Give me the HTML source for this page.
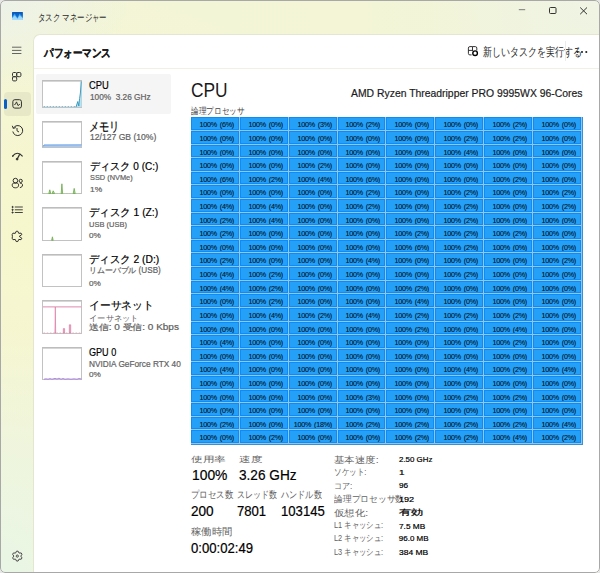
<!DOCTYPE html><html><head><meta charset="utf-8"><title>タスク マネージャー</title><style>
*{box-sizing:border-box}
html,body{margin:0;padding:0}
body{width:600px;height:573px;overflow:hidden;position:relative;background:#e6e6e6;font-family:"Liberation Sans",sans-serif}
#win{position:absolute;left:0;top:0;width:600px;height:573px;border-radius:5px;overflow:hidden;
 background:
  radial-gradient(ellipse 210px 230px at 0px 573px, rgba(233,246,229,1) 0%, rgba(233,246,229,0) 100%),
  radial-gradient(ellipse 130px 90px at 0px 0px, rgba(237,242,233,1) 0%, rgba(237,242,233,0) 100%),
  radial-gradient(ellipse 160px 90px at 600px 0px, rgba(239,244,228,1) 0%, rgba(239,244,228,0) 100%),
  radial-gradient(ellipse 360px 260px at 40px 240px, rgba(247,247,205,1) 0%, rgba(247,247,205,0) 100%),
  linear-gradient(90deg, #f3f5d8 0%, #f3f5d6 60%, #f0f4de 100%);}
#frame{position:absolute;left:0;top:0;width:600px;height:573px;border:1px solid #a8a8a8;border-radius:5px}
.tx{position:absolute;white-space:nowrap;transform-origin:0 50%;-webkit-text-stroke:0.2px currentColor}
#panel{position:absolute;left:33px;top:34px;width:566px;height:538px;background:#fff;border-top:1px solid #e4e6cf;border-left:1px solid #e4e6cf;border-top-left-radius:7px}
#hdrline{position:absolute;left:34px;top:68px;width:565px;height:1px;background:#f0f0e4}
#selcpu{position:absolute;left:36px;top:74px;width:134.5px;height:40px;background:#f5f5f5;border-radius:2px}
.thumb{position:absolute;left:42px;width:40px;border:1px solid #c2c2c2;border-top:1px solid #bdbdbd;box-shadow:inset 0 1px 0 #d6d6d6;background:#fff;overflow:hidden}
#grid{position:absolute;left:191px;top:117px;width:392px;height:328px;background:#93c6ee;border-right:1px solid #3d8fcf;border-bottom:1px solid #3d8fcf}
.c{position:absolute;background:#25a0f8;border:1px solid #0c8cf4;font-size:7.2px;line-height:13.5px;letter-spacing:-0.25px;word-spacing:1.2px;text-align:right;padding-right:4px;color:#001424;white-space:nowrap;overflow:hidden;-webkit-text-stroke:0.1px #001424}
#navsel{position:absolute;left:4px;top:92px;width:26.5px;height:23.5px;background:rgba(0,0,0,0.055);border-radius:4px}
#navbar{position:absolute;left:4px;top:98.7px;width:2.6px;height:10.3px;background:#0a5fc4;border-radius:2px}
svg{position:absolute;overflow:visible}
</style></head><body>
<div id="win">
<div id="panel"></div><div id="hdrline"></div><div id="selcpu"></div>
<div id="navsel"></div><div id="navbar"></div>
<div class="thumb" id="th_cpu" style="top:80.00px;height:28.00px"></div>
<div class="thumb" id="th_mem" style="top:121.00px;height:27.00px"></div>
<div class="thumb" id="th_d0" style="top:161.00px;height:33.00px"></div>
<div class="thumb" id="th_d1" style="top:207.00px;height:34.00px"></div>
<div class="thumb" id="th_d2" style="top:254.00px;height:33.00px"></div>
<div class="thumb" id="th_eth" style="top:300.00px;height:34.00px"></div>
<div class="thumb" id="th_gpu" style="top:347.00px;height:33.00px"></div>
<svg style="left:0;top:0" width="600" height="573" viewBox="0 0 600 573"><rect x="43.50" y="106.20" width="1.80" height="0.80" fill="#5fb0cf"/><rect x="46.50" y="106.20" width="1.80" height="0.80" fill="#5fb0cf"/><rect x="49.50" y="106.20" width="1.80" height="0.80" fill="#5fb0cf"/><rect x="52.50" y="106.20" width="1.80" height="0.80" fill="#5fb0cf"/><rect x="55.50" y="106.20" width="1.80" height="0.80" fill="#5fb0cf"/><rect x="58.50" y="106.20" width="1.80" height="0.80" fill="#5fb0cf"/><rect x="61.50" y="106.20" width="1.80" height="0.80" fill="#5fb0cf"/><rect x="64.50" y="106.20" width="1.80" height="0.80" fill="#5fb0cf"/><rect x="67.50" y="106.20" width="1.80" height="0.80" fill="#5fb0cf"/><rect x="70.50" y="106.20" width="1.80" height="0.80" fill="#5fb0cf"/><rect x="73.50" y="106.20" width="1.80" height="0.80" fill="#5fb0cf"/><path d="M76 107 L77.8 101.5 L78.8 106 L79.6 98.5 L80.4 93 L81.2 81.5 L81.6 81.5 L81.6 107 Z" fill="#b7e2f1"/><path d="M76 107 L77.8 101.5 L78.8 106 L79.6 98.5 L80.4 93 L81.2 81.5" fill="none" stroke="#2f95bb" stroke-width="0.9"/><path d="M43.2 147 L44 145.2 L81.5 145.2 L81.5 147 Z" fill="#a9c9f2"/><path d="M43.2 146.6 L44 145 L81.5 144.9" fill="none" stroke="#5b9ae6" stroke-width="1"/><rect x="43.50" y="193.00" width="1.60" height="0.70" fill="#a8cf8a"/><rect x="46.70" y="193.00" width="1.60" height="0.70" fill="#a8cf8a"/><rect x="49.90" y="193.00" width="1.60" height="0.70" fill="#a8cf8a"/><rect x="53.10" y="193.00" width="1.60" height="0.70" fill="#a8cf8a"/><rect x="56.30" y="193.00" width="1.60" height="0.70" fill="#a8cf8a"/><rect x="59.50" y="193.00" width="1.60" height="0.70" fill="#a8cf8a"/><rect x="62.70" y="193.00" width="1.60" height="0.70" fill="#a8cf8a"/><rect x="65.90" y="193.00" width="1.60" height="0.70" fill="#a8cf8a"/><rect x="69.10" y="193.00" width="1.60" height="0.70" fill="#a8cf8a"/><rect x="72.30" y="193.00" width="1.60" height="0.70" fill="#a8cf8a"/><rect x="75.50" y="193.00" width="1.60" height="0.70" fill="#a8cf8a"/><rect x="78.70" y="193.00" width="1.60" height="0.70" fill="#a8cf8a"/><path d="M48.8 193.5 L49.8 189.8 L50.8 193.5 Z M52.2 193.5 L53.2 190.8 L54.6 193.5 Z M61.2 193.5 L61.9 183.8 L62.6 193.5 Z M73.2 193.5 L74.2 188.4 L75.2 193.5 Z" fill="#b9dc9d" stroke="#6aa84a" stroke-width="0.8"/><path d="M51.6 240.3 L52.4 236.8 L53.2 240.3 Z" fill="#9ccc70" stroke="#6aa84a" stroke-width="0.7"/><rect x="43" y="306.2" width="38.6" height="1.3" fill="#e7a3bf"/><rect x="43.50" y="332.60" width="1.60" height="0.70" fill="#e4a0bb"/><rect x="46.70" y="332.60" width="1.60" height="0.70" fill="#e4a0bb"/><rect x="49.90" y="332.60" width="1.60" height="0.70" fill="#e4a0bb"/><rect x="53.10" y="332.60" width="1.60" height="0.70" fill="#e4a0bb"/><rect x="56.30" y="332.60" width="1.60" height="0.70" fill="#e4a0bb"/><rect x="59.50" y="332.60" width="1.60" height="0.70" fill="#e4a0bb"/><rect x="62.70" y="332.60" width="1.60" height="0.70" fill="#e4a0bb"/><rect x="65.90" y="332.60" width="1.60" height="0.70" fill="#e4a0bb"/><rect x="69.10" y="332.60" width="1.60" height="0.70" fill="#e4a0bb"/><rect x="72.30" y="332.60" width="1.60" height="0.70" fill="#e4a0bb"/><rect x="75.50" y="332.60" width="1.60" height="0.70" fill="#e4a0bb"/><rect x="78.70" y="332.60" width="1.60" height="0.70" fill="#e4a0bb"/><path d="M54.9 333 L55.3 307 L55.7 333 Z" fill="#f0b8cc" stroke="#d8709a" stroke-width="0.6"/><path d="M63.3 333 L63.3 328.6 L64.6 328.6 L64.6 333 Z M69.3 333 L69.3 324.8 L70.7 324.8 L70.7 333 Z" fill="#eaa9c3" stroke="#d8709a" stroke-width="0.6"/><path d="M44 379.2 L46 378.8 L48 379.2 L50 378.6 L52 379.2 L55 378.4 L57 379 L59 378.2 L61 379.2 L63 378.5 L65 379.2 L68 378.8 L71 379.2 L74 378.8 L77 379.2 L79 378.5 L81.5 379" fill="none" stroke="#a77be6" stroke-width="0.9"/></svg>
<div id="grid"><div class="c" style="left:0px;top:0px;width:48px;height:13px">100% (6%)</div><div class="c" style="left:49px;top:0px;width:48px;height:13px">100% (0%)</div><div class="c" style="left:98px;top:0px;width:48px;height:13px">100% (3%)</div><div class="c" style="left:147px;top:0px;width:47px;height:13px">100% (2%)</div><div class="c" style="left:195px;top:0px;width:48px;height:13px">100% (0%)</div><div class="c" style="left:244px;top:0px;width:48px;height:13px">100% (0%)</div><div class="c" style="left:293px;top:0px;width:48px;height:13px">100% (2%)</div><div class="c" style="left:342px;top:0px;width:48px;height:13px">100% (0%)</div><div class="c" style="left:0px;top:14px;width:48px;height:13px">100% (0%)</div><div class="c" style="left:49px;top:14px;width:48px;height:13px">100% (0%)</div><div class="c" style="left:98px;top:14px;width:48px;height:13px">100% (0%)</div><div class="c" style="left:147px;top:14px;width:47px;height:13px">100% (0%)</div><div class="c" style="left:195px;top:14px;width:48px;height:13px">100% (0%)</div><div class="c" style="left:244px;top:14px;width:48px;height:13px">100% (2%)</div><div class="c" style="left:293px;top:14px;width:48px;height:13px">100% (2%)</div><div class="c" style="left:342px;top:14px;width:48px;height:13px">100% (0%)</div><div class="c" style="left:0px;top:28px;width:48px;height:12px">100% (0%)</div><div class="c" style="left:49px;top:28px;width:48px;height:12px">100% (0%)</div><div class="c" style="left:98px;top:28px;width:48px;height:12px">100% (0%)</div><div class="c" style="left:147px;top:28px;width:47px;height:12px">100% (0%)</div><div class="c" style="left:195px;top:28px;width:48px;height:12px">100% (0%)</div><div class="c" style="left:244px;top:28px;width:48px;height:12px">100% (4%)</div><div class="c" style="left:293px;top:28px;width:48px;height:12px">100% (0%)</div><div class="c" style="left:342px;top:28px;width:48px;height:12px">100% (0%)</div><div class="c" style="left:0px;top:41px;width:48px;height:13px">100% (0%)</div><div class="c" style="left:49px;top:41px;width:48px;height:13px">100% (0%)</div><div class="c" style="left:98px;top:41px;width:48px;height:13px">100% (2%)</div><div class="c" style="left:147px;top:41px;width:47px;height:13px">100% (0%)</div><div class="c" style="left:195px;top:41px;width:48px;height:13px">100% (0%)</div><div class="c" style="left:244px;top:41px;width:48px;height:13px">100% (0%)</div><div class="c" style="left:293px;top:41px;width:48px;height:13px">100% (0%)</div><div class="c" style="left:342px;top:41px;width:48px;height:13px">100% (0%)</div><div class="c" style="left:0px;top:55px;width:48px;height:12px">100% (6%)</div><div class="c" style="left:49px;top:55px;width:48px;height:12px">100% (2%)</div><div class="c" style="left:98px;top:55px;width:48px;height:12px">100% (4%)</div><div class="c" style="left:147px;top:55px;width:47px;height:12px">100% (6%)</div><div class="c" style="left:195px;top:55px;width:48px;height:12px">100% (0%)</div><div class="c" style="left:244px;top:55px;width:48px;height:12px">100% (0%)</div><div class="c" style="left:293px;top:55px;width:48px;height:12px">100% (2%)</div><div class="c" style="left:342px;top:55px;width:48px;height:12px">100% (0%)</div><div class="c" style="left:0px;top:68px;width:48px;height:13px">100% (0%)</div><div class="c" style="left:49px;top:68px;width:48px;height:13px">100% (0%)</div><div class="c" style="left:98px;top:68px;width:48px;height:13px">100% (0%)</div><div class="c" style="left:147px;top:68px;width:47px;height:13px">100% (2%)</div><div class="c" style="left:195px;top:68px;width:48px;height:13px">100% (0%)</div><div class="c" style="left:244px;top:68px;width:48px;height:13px">100% (2%)</div><div class="c" style="left:293px;top:68px;width:48px;height:13px">100% (0%)</div><div class="c" style="left:342px;top:68px;width:48px;height:13px">100% (2%)</div><div class="c" style="left:0px;top:82px;width:48px;height:13px">100% (4%)</div><div class="c" style="left:49px;top:82px;width:48px;height:13px">100% (4%)</div><div class="c" style="left:98px;top:82px;width:48px;height:13px">100% (0%)</div><div class="c" style="left:147px;top:82px;width:47px;height:13px">100% (2%)</div><div class="c" style="left:195px;top:82px;width:48px;height:13px">100% (0%)</div><div class="c" style="left:244px;top:82px;width:48px;height:13px">100% (2%)</div><div class="c" style="left:293px;top:82px;width:48px;height:13px">100% (0%)</div><div class="c" style="left:342px;top:82px;width:48px;height:13px">100% (2%)</div><div class="c" style="left:0px;top:96px;width:48px;height:12px">100% (2%)</div><div class="c" style="left:49px;top:96px;width:48px;height:12px">100% (4%)</div><div class="c" style="left:98px;top:96px;width:48px;height:12px">100% (0%)</div><div class="c" style="left:147px;top:96px;width:47px;height:12px">100% (0%)</div><div class="c" style="left:195px;top:96px;width:48px;height:12px">100% (0%)</div><div class="c" style="left:244px;top:96px;width:48px;height:12px">100% (2%)</div><div class="c" style="left:293px;top:96px;width:48px;height:12px">100% (0%)</div><div class="c" style="left:342px;top:96px;width:48px;height:12px">100% (0%)</div><div class="c" style="left:0px;top:109px;width:48px;height:13px">100% (2%)</div><div class="c" style="left:49px;top:109px;width:48px;height:13px">100% (0%)</div><div class="c" style="left:98px;top:109px;width:48px;height:13px">100% (0%)</div><div class="c" style="left:147px;top:109px;width:47px;height:13px">100% (0%)</div><div class="c" style="left:195px;top:109px;width:48px;height:13px">100% (2%)</div><div class="c" style="left:244px;top:109px;width:48px;height:13px">100% (2%)</div><div class="c" style="left:293px;top:109px;width:48px;height:13px">100% (2%)</div><div class="c" style="left:342px;top:109px;width:48px;height:13px">100% (0%)</div><div class="c" style="left:0px;top:123px;width:48px;height:12px">100% (0%)</div><div class="c" style="left:49px;top:123px;width:48px;height:12px">100% (0%)</div><div class="c" style="left:98px;top:123px;width:48px;height:12px">100% (0%)</div><div class="c" style="left:147px;top:123px;width:47px;height:12px">100% (0%)</div><div class="c" style="left:195px;top:123px;width:48px;height:12px">100% (6%)</div><div class="c" style="left:244px;top:123px;width:48px;height:12px">100% (2%)</div><div class="c" style="left:293px;top:123px;width:48px;height:12px">100% (0%)</div><div class="c" style="left:342px;top:123px;width:48px;height:12px">100% (0%)</div><div class="c" style="left:0px;top:136px;width:48px;height:13px">100% (2%)</div><div class="c" style="left:49px;top:136px;width:48px;height:13px">100% (0%)</div><div class="c" style="left:98px;top:136px;width:48px;height:13px">100% (0%)</div><div class="c" style="left:147px;top:136px;width:47px;height:13px">100% (4%)</div><div class="c" style="left:195px;top:136px;width:48px;height:13px">100% (0%)</div><div class="c" style="left:244px;top:136px;width:48px;height:13px">100% (0%)</div><div class="c" style="left:293px;top:136px;width:48px;height:13px">100% (0%)</div><div class="c" style="left:342px;top:136px;width:48px;height:13px">100% (2%)</div><div class="c" style="left:0px;top:150px;width:48px;height:13px">100% (4%)</div><div class="c" style="left:49px;top:150px;width:48px;height:13px">100% (2%)</div><div class="c" style="left:98px;top:150px;width:48px;height:13px">100% (0%)</div><div class="c" style="left:147px;top:150px;width:47px;height:13px">100% (0%)</div><div class="c" style="left:195px;top:150px;width:48px;height:13px">100% (0%)</div><div class="c" style="left:244px;top:150px;width:48px;height:13px">100% (2%)</div><div class="c" style="left:293px;top:150px;width:48px;height:13px">100% (0%)</div><div class="c" style="left:342px;top:150px;width:48px;height:13px">100% (0%)</div><div class="c" style="left:0px;top:164px;width:48px;height:12px">100% (4%)</div><div class="c" style="left:49px;top:164px;width:48px;height:12px">100% (2%)</div><div class="c" style="left:98px;top:164px;width:48px;height:12px">100% (0%)</div><div class="c" style="left:147px;top:164px;width:47px;height:12px">100% (0%)</div><div class="c" style="left:195px;top:164px;width:48px;height:12px">100% (2%)</div><div class="c" style="left:244px;top:164px;width:48px;height:12px">100% (0%)</div><div class="c" style="left:293px;top:164px;width:48px;height:12px">100% (0%)</div><div class="c" style="left:342px;top:164px;width:48px;height:12px">100% (0%)</div><div class="c" style="left:0px;top:177px;width:48px;height:13px">100% (0%)</div><div class="c" style="left:49px;top:177px;width:48px;height:13px">100% (2%)</div><div class="c" style="left:98px;top:177px;width:48px;height:13px">100% (0%)</div><div class="c" style="left:147px;top:177px;width:47px;height:13px">100% (0%)</div><div class="c" style="left:195px;top:177px;width:48px;height:13px">100% (4%)</div><div class="c" style="left:244px;top:177px;width:48px;height:13px">100% (0%)</div><div class="c" style="left:293px;top:177px;width:48px;height:13px">100% (0%)</div><div class="c" style="left:342px;top:177px;width:48px;height:13px">100% (0%)</div><div class="c" style="left:0px;top:191px;width:48px;height:13px">100% (0%)</div><div class="c" style="left:49px;top:191px;width:48px;height:13px">100% (4%)</div><div class="c" style="left:98px;top:191px;width:48px;height:13px">100% (2%)</div><div class="c" style="left:147px;top:191px;width:47px;height:13px">100% (4%)</div><div class="c" style="left:195px;top:191px;width:48px;height:13px">100% (2%)</div><div class="c" style="left:244px;top:191px;width:48px;height:13px">100% (2%)</div><div class="c" style="left:293px;top:191px;width:48px;height:13px">100% (2%)</div><div class="c" style="left:342px;top:191px;width:48px;height:13px">100% (0%)</div><div class="c" style="left:0px;top:205px;width:48px;height:12px">100% (0%)</div><div class="c" style="left:49px;top:205px;width:48px;height:12px">100% (0%)</div><div class="c" style="left:98px;top:205px;width:48px;height:12px">100% (0%)</div><div class="c" style="left:147px;top:205px;width:47px;height:12px">100% (0%)</div><div class="c" style="left:195px;top:205px;width:48px;height:12px">100% (2%)</div><div class="c" style="left:244px;top:205px;width:48px;height:12px">100% (0%)</div><div class="c" style="left:293px;top:205px;width:48px;height:12px">100% (4%)</div><div class="c" style="left:342px;top:205px;width:48px;height:12px">100% (0%)</div><div class="c" style="left:0px;top:218px;width:48px;height:13px">100% (4%)</div><div class="c" style="left:49px;top:218px;width:48px;height:13px">100% (0%)</div><div class="c" style="left:98px;top:218px;width:48px;height:13px">100% (0%)</div><div class="c" style="left:147px;top:218px;width:47px;height:13px">100% (0%)</div><div class="c" style="left:195px;top:218px;width:48px;height:13px">100% (0%)</div><div class="c" style="left:244px;top:218px;width:48px;height:13px">100% (0%)</div><div class="c" style="left:293px;top:218px;width:48px;height:13px">100% (2%)</div><div class="c" style="left:342px;top:218px;width:48px;height:13px">100% (0%)</div><div class="c" style="left:0px;top:232px;width:48px;height:12px">100% (0%)</div><div class="c" style="left:49px;top:232px;width:48px;height:12px">100% (0%)</div><div class="c" style="left:98px;top:232px;width:48px;height:12px">100% (0%)</div><div class="c" style="left:147px;top:232px;width:47px;height:12px">100% (0%)</div><div class="c" style="left:195px;top:232px;width:48px;height:12px">100% (0%)</div><div class="c" style="left:244px;top:232px;width:48px;height:12px">100% (0%)</div><div class="c" style="left:293px;top:232px;width:48px;height:12px">100% (0%)</div><div class="c" style="left:342px;top:232px;width:48px;height:12px">100% (0%)</div><div class="c" style="left:0px;top:245px;width:48px;height:13px">100% (4%)</div><div class="c" style="left:49px;top:245px;width:48px;height:13px">100% (0%)</div><div class="c" style="left:98px;top:245px;width:48px;height:13px">100% (0%)</div><div class="c" style="left:147px;top:245px;width:47px;height:13px">100% (0%)</div><div class="c" style="left:195px;top:245px;width:48px;height:13px">100% (0%)</div><div class="c" style="left:244px;top:245px;width:48px;height:13px">100% (4%)</div><div class="c" style="left:293px;top:245px;width:48px;height:13px">100% (2%)</div><div class="c" style="left:342px;top:245px;width:48px;height:13px">100% (4%)</div><div class="c" style="left:0px;top:259px;width:48px;height:13px">100% (0%)</div><div class="c" style="left:49px;top:259px;width:48px;height:13px">100% (0%)</div><div class="c" style="left:98px;top:259px;width:48px;height:13px">100% (0%)</div><div class="c" style="left:147px;top:259px;width:47px;height:13px">100% (0%)</div><div class="c" style="left:195px;top:259px;width:48px;height:13px">100% (0%)</div><div class="c" style="left:244px;top:259px;width:48px;height:13px">100% (0%)</div><div class="c" style="left:293px;top:259px;width:48px;height:13px">100% (0%)</div><div class="c" style="left:342px;top:259px;width:48px;height:13px">100% (0%)</div><div class="c" style="left:0px;top:273px;width:48px;height:12px">100% (0%)</div><div class="c" style="left:49px;top:273px;width:48px;height:12px">100% (0%)</div><div class="c" style="left:98px;top:273px;width:48px;height:12px">100% (0%)</div><div class="c" style="left:147px;top:273px;width:47px;height:12px">100% (3%)</div><div class="c" style="left:195px;top:273px;width:48px;height:12px">100% (0%)</div><div class="c" style="left:244px;top:273px;width:48px;height:12px">100% (2%)</div><div class="c" style="left:293px;top:273px;width:48px;height:12px">100% (2%)</div><div class="c" style="left:342px;top:273px;width:48px;height:12px">100% (0%)</div><div class="c" style="left:0px;top:286px;width:48px;height:13px">100% (0%)</div><div class="c" style="left:49px;top:286px;width:48px;height:13px">100% (0%)</div><div class="c" style="left:98px;top:286px;width:48px;height:13px">100% (0%)</div><div class="c" style="left:147px;top:286px;width:47px;height:13px">100% (0%)</div><div class="c" style="left:195px;top:286px;width:48px;height:13px">100% (0%)</div><div class="c" style="left:244px;top:286px;width:48px;height:13px">100% (0%)</div><div class="c" style="left:293px;top:286px;width:48px;height:13px">100% (0%)</div><div class="c" style="left:342px;top:286px;width:48px;height:13px">100% (0%)</div><div class="c" style="left:0px;top:300px;width:48px;height:12px">100% (2%)</div><div class="c" style="left:49px;top:300px;width:48px;height:12px">100% (0%)</div><div class="c" style="left:98px;top:300px;width:48px;height:12px">100% (18%)</div><div class="c" style="left:147px;top:300px;width:47px;height:12px">100% (2%)</div><div class="c" style="left:195px;top:300px;width:48px;height:12px">100% (2%)</div><div class="c" style="left:244px;top:300px;width:48px;height:12px">100% (2%)</div><div class="c" style="left:293px;top:300px;width:48px;height:12px">100% (2%)</div><div class="c" style="left:342px;top:300px;width:48px;height:12px">100% (4%)</div><div class="c" style="left:0px;top:313px;width:48px;height:13px">100% (0%)</div><div class="c" style="left:49px;top:313px;width:48px;height:13px">100% (2%)</div><div class="c" style="left:98px;top:313px;width:48px;height:13px">100% (0%)</div><div class="c" style="left:147px;top:313px;width:47px;height:13px">100% (0%)</div><div class="c" style="left:195px;top:313px;width:48px;height:13px">100% (2%)</div><div class="c" style="left:244px;top:313px;width:48px;height:13px">100% (2%)</div><div class="c" style="left:293px;top:313px;width:48px;height:13px">100% (4%)</div><div class="c" style="left:342px;top:313px;width:48px;height:13px">100% (2%)</div></div>
<div class="tx" id="t_title" style="left:37.70px;top:11.72px;font-size:9.59px;line-height:11.51px;color:#2b2b2b;-webkit-text-stroke:0;transform:scaleX(0.744)">タスク マネージャー</div>
<div class="tx" id="t_perf" style="left:43.80px;top:45.55px;font-size:12.35px;line-height:14.83px;color:#1b1b1b;font-weight:700;transform:scaleX(0.798)">パフォーマンス</div>
<div class="tx" id="t_newtask" style="left:483.30px;top:45.12px;font-size:11.92px;line-height:14.30px;color:#2b2b2b;-webkit-text-stroke:0;transform:scaleX(0.746)">新しいタスクを実行する</div>
<div class="tx" id="s_cpu" style="left:89.10px;top:78.74px;font-size:11.05px;line-height:13.26px;color:#000000;transform:scaleX(0.848)">CPU</div>
<div class="tx" id="s_cpu2" style="left:90.20px;top:93.29px;font-size:8.14px;line-height:9.77px;color:#626262;transform:scaleX(1.017)">100%  3.26 GHz</div>
<div class="tx" id="s_mem" style="left:89.20px;top:119.68px;font-size:12.65px;line-height:15.17px;color:#000000;transform:scaleX(0.786)">メモリ</div>
<div class="tx" id="s_mem2" style="left:89.50px;top:133.09px;font-size:8.14px;line-height:9.77px;color:#626262;transform:scaleX(1.057)">12/127 GB (10%)</div>
<div class="tx" id="s_d0" style="left:89.50px;top:159.53px;font-size:10.90px;line-height:13.08px;color:#000000;transform:scaleX(0.921)">ディスク 0 (C:)</div>
<div class="tx" id="s_d0a" style="left:89.80px;top:173.46px;font-size:7.70px;line-height:9.24px;color:#626262;transform:scaleX(0.959)">SSD (NVMe)</div>
<div class="tx" id="s_d0b" style="left:89.80px;top:185.18px;font-size:7.92px;line-height:9.51px;color:#626262;transform:scaleX(1.060)">1%</div>
<div class="tx" id="s_d1" style="left:88.90px;top:205.93px;font-size:10.90px;line-height:13.08px;color:#000000;transform:scaleX(0.947)">ディスク 1 (Z:)</div>
<div class="tx" id="s_d1a" style="left:89.00px;top:219.69px;font-size:7.99px;line-height:9.59px;color:#626262;transform:scaleX(0.939)">USB (USB)</div>
<div class="tx" id="s_d1b" style="left:89.00px;top:231.29px;font-size:7.99px;line-height:9.59px;color:#626262;transform:scaleX(1.027)">0%</div>
<div class="tx" id="s_d2" style="left:89.00px;top:252.53px;font-size:10.90px;line-height:13.08px;color:#000000;transform:scaleX(0.946)">ディスク 2 (D:)</div>
<div class="tx" id="s_d2a" style="left:89.00px;top:266.31px;font-size:8.28px;line-height:9.94px;color:#626262;transform:scaleX(0.986)">リムーバブル (USB)</div>
<div class="tx" id="s_d2b" style="left:89.00px;top:278.69px;font-size:7.99px;line-height:9.59px;color:#626262;transform:scaleX(1.027)">0%</div>
<div class="tx" id="s_eth" style="left:89.00px;top:298.98px;font-size:11.48px;line-height:13.78px;color:#000000;transform:scaleX(0.978)">イーサネット</div>
<div class="tx" id="s_eth2" style="left:89.00px;top:313.69px;font-size:8.14px;line-height:9.77px;color:#626262;-webkit-text-stroke:0;transform:scaleX(1.035)">イーサネット</div>
<div class="tx" id="s_eth3" style="left:89.00px;top:323.29px;font-size:8.14px;line-height:9.77px;color:#626262;transform:scaleX(1.230)">送信: 0 受信: 0 Kbps</div>
<div class="tx" id="s_gpu" style="left:89.00px;top:345.52px;font-size:10.76px;line-height:12.91px;color:#000000;transform:scaleX(0.845)">GPU 0</div>
<div class="tx" id="s_gpu2" style="left:89.00px;top:358.72px;font-size:8.43px;line-height:10.12px;color:#626262;transform:scaleX(0.982)">NVIDIA GeForce RTX 40</div>
<div class="tx" id="s_gpu3" style="left:89.00px;top:370.29px;font-size:7.99px;line-height:9.59px;color:#626262;transform:scaleX(1.027)">0%</div>
<div class="tx" id="m_cpu" style="left:190.50px;top:78.68px;font-size:19.62px;line-height:23.55px;color:#1a1a1a;-webkit-text-stroke:0;transform:scaleX(0.885)">CPU</div>
<div class="tx" id="m_model" style="left:351.30px;top:86.54px;font-size:11.05px;line-height:13.26px;color:#1b1b1b;transform:scaleX(0.941)">AMD Ryzen Threadripper PRO 9995WX 96-Cores</div>
<div class="tx" id="m_lp" style="left:191.00px;top:105.31px;font-size:9.45px;line-height:11.34px;color:#444;-webkit-text-stroke:0;transform:scaleX(0.851)">論理プロセッサ</div>
<div class="tx" id="st_use" style="left:191.40px;top:454.69px;font-size:8.14px;line-height:9.77px;color:#626262;-webkit-text-stroke:0;transform:scaleX(1.450)">使用率</div>
<div class="tx" id="st_spd" style="left:238.60px;top:454.69px;font-size:8.14px;line-height:9.77px;color:#626262;-webkit-text-stroke:0;transform:scaleX(1.440)">速度</div>
<div class="tx" id="st_use_v" style="left:191.60px;top:465.99px;font-size:15.12px;line-height:18.14px;color:#000000;transform:scaleX(0.917)">100%</div>
<div class="tx" id="st_spd_v" style="left:239.00px;top:465.99px;font-size:15.12px;line-height:18.14px;color:#000000;transform:scaleX(0.902)">3.26 GHz</div>
<div class="tx" id="st_proc" style="left:191.00px;top:489.37px;font-size:10.17px;line-height:12.21px;color:#626262;-webkit-text-stroke:0;transform:scaleX(0.842)">プロセス数</div>
<div class="tx" id="st_thr" style="left:236.60px;top:489.37px;font-size:10.17px;line-height:12.21px;color:#626262;-webkit-text-stroke:0;transform:scaleX(0.800)">スレッド数</div>
<div class="tx" id="st_hnd" style="left:281.00px;top:489.37px;font-size:10.17px;line-height:12.21px;color:#626262;-webkit-text-stroke:0;transform:scaleX(0.816)">ハンドル数</div>
<div class="tx" id="st_proc_v" style="left:191.00px;top:502.68px;font-size:13.81px;line-height:16.57px;color:#000000;transform:scaleX(0.982)">200</div>
<div class="tx" id="st_thr_v" style="left:237.00px;top:502.68px;font-size:13.81px;line-height:16.57px;color:#000000;transform:scaleX(0.950)">7801</div>
<div class="tx" id="st_hnd_v" style="left:281.25px;top:502.68px;font-size:13.81px;line-height:16.57px;color:#000000;transform:scaleX(0.951)">103145</div>
<div class="tx" id="st_up" style="left:191.00px;top:526.37px;font-size:10.17px;line-height:12.21px;color:#626262;-webkit-text-stroke:0;transform:scaleX(1.033)">稼働時間</div>
<div class="tx" id="st_up_v" style="left:191.00px;top:539.74px;font-size:14.53px;line-height:17.44px;color:#000000;transform:scaleX(0.904)">0:00:02:49</div>
<div class="tx" id="r_l0" style="left:334.00px;top:454.67px;font-size:9.01px;line-height:10.81px;color:#626262;-webkit-text-stroke:0;transform:scaleX(1.159)">基本速度:</div>
<div class="tx" id="r_v0" style="left:398.80px;top:455.49px;font-size:7.99px;line-height:9.59px;color:#000000;transform:scaleX(0.991)">2.50 GHz</div>
<div class="tx" id="r_l1" style="left:334.00px;top:467.13px;font-size:9.01px;line-height:10.81px;color:#626262;-webkit-text-stroke:0;transform:scaleX(0.841)">ソケット:</div>
<div class="tx" id="r_v1" style="left:398.80px;top:467.95px;font-size:7.99px;line-height:9.59px;color:#000000;transform:scaleX(1.233)">1</div>
<div class="tx" id="r_l2" style="left:334.00px;top:480.59px;font-size:9.01px;line-height:10.81px;color:#626262;-webkit-text-stroke:0;transform:scaleX(0.893)">コア:</div>
<div class="tx" id="r_v2" style="left:398.80px;top:481.41px;font-size:7.99px;line-height:9.59px;color:#000000;transform:scaleX(1.025)">96</div>
<div class="tx" id="r_l3" style="left:334.00px;top:494.05px;font-size:9.01px;line-height:10.81px;color:#626262;-webkit-text-stroke:0;transform:scaleX(0.975)">論理プロセッサ数:</div>
<div class="tx" id="r_v3" style="left:398.80px;top:494.87px;font-size:7.99px;line-height:9.59px;color:#000000;transform:scaleX(1.136)">192</div>
<div class="tx" id="r_l4" style="left:334.00px;top:507.51px;font-size:9.01px;line-height:10.81px;color:#626262;-webkit-text-stroke:0;transform:scaleX(1.155)">仮想化:</div>
<div class="tx" id="r_v4" style="left:398.80px;top:508.33px;font-size:7.99px;line-height:9.59px;color:#000000;transform:scaleX(1.520)">有効</div>
<div class="tx" id="r_l5" style="left:334.00px;top:519.97px;font-size:9.01px;line-height:10.81px;color:#626262;-webkit-text-stroke:0;transform:scaleX(0.816)">L1 キャッシュ:</div>
<div class="tx" id="r_v5" style="left:398.80px;top:521.79px;font-size:7.99px;line-height:9.59px;color:#000000;transform:scaleX(1.039)">7.5 MB</div>
<div class="tx" id="r_l6" style="left:334.00px;top:533.43px;font-size:9.01px;line-height:10.81px;color:#626262;-webkit-text-stroke:0;transform:scaleX(0.816)">L2 キャッシュ:</div>
<div class="tx" id="r_v6" style="left:398.80px;top:534.25px;font-size:7.99px;line-height:9.59px;color:#000000">96.0 MB</div>
<div class="tx" id="r_l7" style="left:334.00px;top:546.89px;font-size:9.01px;line-height:10.81px;color:#626262;-webkit-text-stroke:0;transform:scaleX(0.816)">L3 キャッシュ:</div>
<div class="tx" id="r_v7" style="left:398.80px;top:547.71px;font-size:7.99px;line-height:9.59px;color:#000000;transform:scaleX(1.064)">384 MB</div>
<svg style="left:11.8px;top:11.8px" width="11" height="8" viewBox="0 0 11 8"><defs><linearGradient id="ag" x1="0" y1="0" x2="0" y2="1"><stop offset="0" stop-color="#8fd0fb"/><stop offset="1" stop-color="#a9dcfc"/></linearGradient><linearGradient id="ag2" x1="0" y1="0" x2="0" y2="1"><stop offset="0" stop-color="#0a55b8"/><stop offset="0.6" stop-color="#0d6fd0"/><stop offset="1" stop-color="#2a8ee6"/></linearGradient></defs><rect x="0" y="0" width="10.9" height="8" rx="0.6" fill="url(#ag2)"/><path d="M0 5.2 L2.7 1.6 L5.5 6 L7.5 1.6 L10.9 5.2 L10.9 8 L0 8 Z" fill="#3fa3ee" opacity="0.9"/><path d="M0 6.2 L2.7 3.2 L5.5 6.8 L7.5 3.2 L10.9 6.2 L10.9 8 L0 8 Z" fill="url(#ag)"/></svg>
<svg style="left:518px;top:5px" width="10" height="10" viewBox="0 0 10 10"><path d="M0.8 4.7 H7.2" stroke="#7a7a7a" stroke-width="1"/></svg>
<svg style="left:548px;top:6px" width="10" height="10" viewBox="0 0 10 10"><rect x="1.5" y="1.5" width="6.5" height="6" rx="1" stroke="#333" stroke-width="1" fill="none"/></svg>
<svg style="left:579px;top:6px" width="10" height="10" viewBox="0 0 10 10"><path d="M1.2 1.5 L8 8.2 M8 1.5 L1.2 8.2" stroke="#333" stroke-width="1" fill="none"/></svg>
<svg style="left:11px;top:44px" width="12" height="12" viewBox="0 0 12 12"><path d="M1 3.2 H10.4 M1 6.4 H10.4 M1 9.5 H10.4" stroke="#555" stroke-width="0.9"/></svg>
<svg style="left:11px;top:71px" width="12" height="12" viewBox="0 0 12 12" fill="none" stroke="#303030" stroke-width="1"><rect x="1.5" y="1.5" width="4.2" height="4.2" rx="1.2"/><rect x="5.7" y="1.5" width="4.2" height="4.2" rx="1.2"/><rect x="1.5" y="5.7" width="4.2" height="4.2" rx="1.2"/></svg>
<svg style="left:0;top:90px" width="34" height="26" viewBox="0 90 34 26" fill="none" stroke="#303030" stroke-width="1"><rect x="12.85" y="99.7" width="8.6" height="8.4" rx="2"/><path d="M14.3 104.6 L15.3 104.4 L16.5 101.9 L18 105.6 L19.9 104.2" stroke-width="0.95" stroke-linejoin="round"/></svg>
<svg style="left:11px;top:124px" width="13" height="13" viewBox="0 0 13 13" fill="none" stroke="#303030" stroke-width="1"><path d="M2.3 4.2 A5 5 0 1 1 1.8 7.5"/><path d="M1.3 1.8 L2.3 4.4 L4.8 3.6"/><path d="M6 4 V6.8 L8 8"/></svg>
<svg style="left:11px;top:205px" width="13" height="10" viewBox="0 0 13 10" fill="none" stroke="#303030" stroke-width="1"><path d="M3.8 2 H11.8 M3.8 4.8 H11.8 M3.8 7.5 H11.8" stroke-width="0.9"/><circle cx="1.6" cy="2" r="0.6" fill="#303030"/><circle cx="1.6" cy="4.8" r="0.6" fill="#303030"/><circle cx="1.6" cy="7.5" r="0.6" fill="#303030"/></svg>
<svg style="left:0;top:0" width="40" height="250" viewBox="0 0 40 250" fill="none" stroke="#303030" stroke-width="1"><path d="M12.3 156.4 Q17.4 150.2 22.6 156.4" stroke-width="1.1"/><path d="M12.3 156.4 L13.6 155.6" stroke-width="1.2"/><path d="M17.1 159.2 L19.7 154.3" stroke-width="1.3"/><circle cx="17.1" cy="159.1" r="0.9" fill="#303030"/><circle cx="15.4" cy="180.6" r="2.3"/><path d="M12.2 185.2 C12.2 183.6 13 183.1 14 183.1 H16.8 C17.8 183.1 18.6 183.6 18.6 185.2 C18.6 187 17.2 187.8 15.4 187.8 C13.6 187.8 12.2 187 12.2 185.2 Z"/><circle cx="20.7" cy="180.9" r="1.6"/><path d="M19.9 183.3 H20.8 C21.8 183.3 22.5 184 22.5 185 C22.5 186.5 21.5 187.4 19.9 187.6"/><path d="M16.19 231.26 L17.81 231.26 L18.75 233.37 L21.04 233.13 L21.85 234.54 L19.20 236.40 L21.85 238.26 L21.04 239.67 L18.75 239.43 L17.81 241.54 L16.19 241.54 L15.25 239.43 L12.96 239.67 L12.15 238.26 L12.40 236.40 L12.15 234.54 L12.96 233.13 L15.25 233.37Z" stroke-linejoin="round"/></svg>
<svg style="left:0;top:540px" width="40" height="33" viewBox="0 540 40 33" fill="none" stroke="#4a4a4a" stroke-width="1"><path d="M16.52 551.16 L18.08 551.16 L19.05 553.07 L21.19 552.95 L21.97 554.31 L20.80 556.10 L21.97 557.89 L21.19 559.25 L19.05 559.13 L18.08 561.04 L16.52 561.04 L15.55 559.13 L13.41 559.25 L12.63 557.89 L13.80 556.10 L12.63 554.31 L13.41 552.95 L15.55 553.07Z" stroke-linejoin="round"/><circle cx="17.3" cy="556.1" r="1.1"/></svg>
<svg style="left:465px;top:43px" width="16" height="16" viewBox="465 43 16 16" fill="none" stroke="#2a2a2a" stroke-width="0.95"><path d="M472.5 46.6 H469.9 Q468.4 46.6 468.4 48.1 V53.4 Q468.4 54.9 469.9 54.9 H471.6"/><path d="M472.5 46.6 H475.3 Q476.8 46.6 476.8 48.1 V50.4"/><path d="M468.4 50.4 H472.5 M472.5 46.6 V51"/><circle cx="475.1" cy="53.2" r="2.3" stroke="#000" stroke-width="1.4" fill="#fff"/></svg>
<div style="position:absolute;left:565px;top:41px;width:1px;height:20px;background:#ebebeb"></div>
<svg style="left:575px;top:49px" width="14" height="6" viewBox="0 0 14 6"><circle cx="2.7" cy="3" r="1.05" fill="#222"/><circle cx="7" cy="3" r="1.05" fill="#222"/><circle cx="11.3" cy="3" r="1.05" fill="#222"/></svg>
<div id="frame"></div></div></body></html>
